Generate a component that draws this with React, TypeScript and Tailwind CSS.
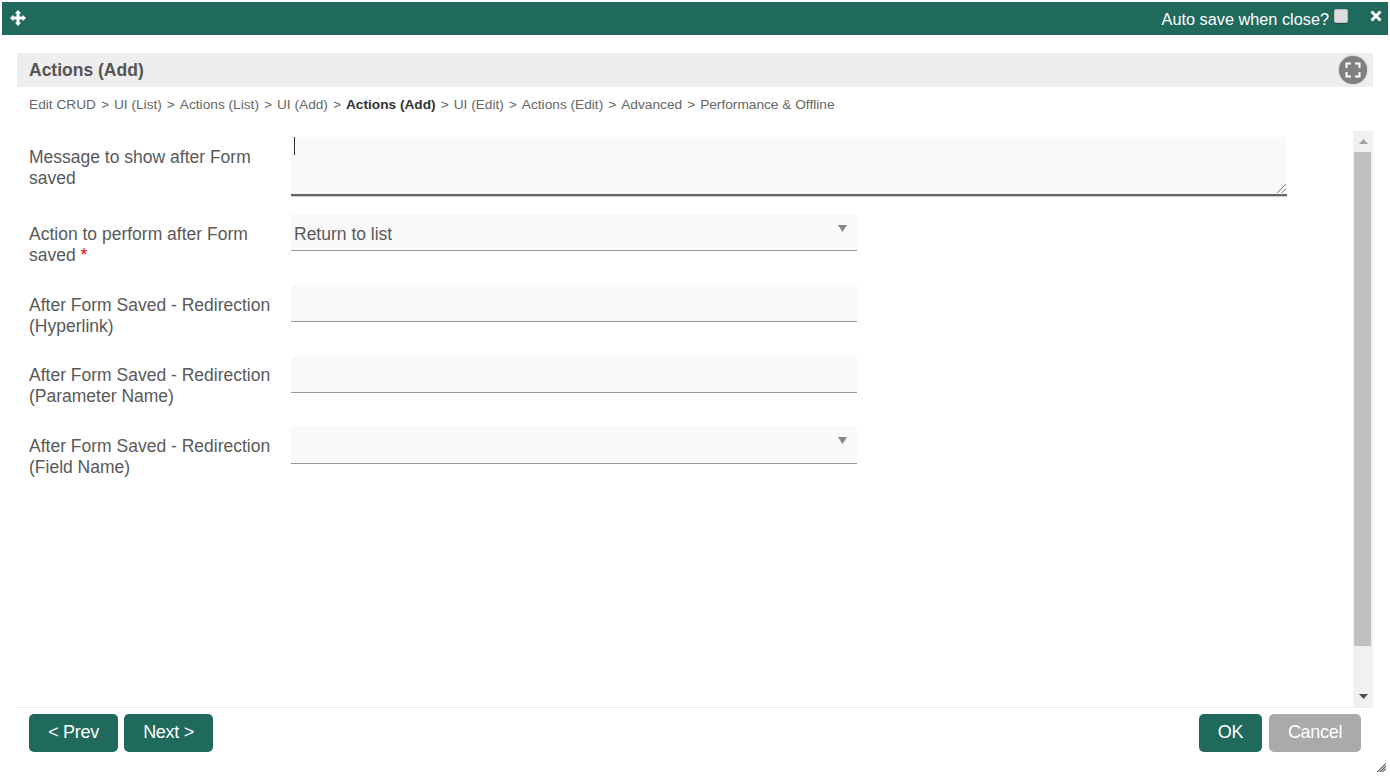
const Field = ({
  label,
  required,
  mb,
  h,
  children,
}: {
  label: string[];
  required?: boolean;
  mb: string;
  h: string;
  children?: React.ReactNode;
}) => {
  return (
    <div className={`flex ${mb}`}>
      <div className="w-[274px] shrink-0 pl-3 pt-[10px] text-[17.5px] leading-[21px] text-[#595959]">
        <div>{label[0]}</div>
        <div>
          {label[1]}
          {required && <span className="text-[#e00]"> *</span>}
        </div>
      </div>
      <div className={`relative w-[566px] ${h} bg-[#f9f9f9] border-b border-[#999]`}>{children}</div>
    </div>
  );
};

const Caret = () => (
  <svg className="absolute right-[10px] top-[11px]" width="9" height="7" viewBox="0 0 9 7">
    <path d="M0 0h9L4.500 7z" fill="#888" />
  </svg>
);

const crumbs = [
  "Edit CRUD",
  "UI (List)",
  "Actions (List)",
  "UI (Add)",
  "Actions (Add)",
  "UI (Edit)",
  "Actions (Edit)",
  "Advanced",
  "Performance & Offline",
];

const btn = "h-[38px] rounded-[5px] pb-0.5 text-[18px] tracking-[-0.3px] text-white";

const App = () => {
  return (
    <div className="relative flex h-screen flex-col bg-white px-[2px] pb-[25px] pt-[2px] font-['Liberation_Sans',Arial,sans-serif]">
      <div className="flex h-[33px] shrink-0 items-start justify-between bg-[#206a5d] text-white">
        <svg className="ml-[8px] mt-[8px]" width="16" height="16" viewBox="0 0 16 16" fill="#fff">
          <path d="M8 0l3.200 3.400H9.500v3.100h3.100V4.800L16 8l-3.400 3.200V9.500H9.500v3.100h1.700L8 16l-3.200-3.400h1.700V9.500H3.400v1.700L0 8l3.400-3.200v1.700h3.100V3.400H4.800z" />
        </svg>
        <div className="flex items-start">
          <span className="mt-[7px] text-[16.3px] leading-[21px]">Auto save when close?</span>
          <span className="ml-[5px] mt-[7px] h-[14px] w-[14px] rounded-[2px] border border-[#bbb] bg-[#ddd] shadow-[0_1px_1px_rgba(0,0,0,0.25)]" />
          <svg className="ml-[22px] mr-[6px] mt-[8px]" width="12" height="12" viewBox="0 0 12 12">
            <path d="M1.500 1.500l9 9M10.500 1.500l-9 9" stroke="#fff" strokeWidth="3" />
          </svg>
        </div>
      </div>

      <div className="mx-[15px] mt-[18px] flex min-h-0 flex-1 flex-col">
        <div className="flex h-[34px] shrink-0 items-center justify-between bg-[#eee] pl-3 pr-[6px]">
          <h2 className="text-[17.5px] font-bold text-[#555]">Actions (Add)</h2>
          <div className="flex h-[28px] w-[28px] items-center justify-center rounded-full bg-[#808080] shadow-[0_0_2px_rgba(0,0,0,0.3)]">
            <svg width="16" height="16" viewBox="0 0 16 16" fill="none" stroke="#fff" strokeWidth="2">
              <path d="M1.500 6V1.500H6M10 1.500h4.500V6M14.500 10v4.500H10M6 14.500H1.500V10" />
            </svg>
          </div>
        </div>

        <div className="mt-[9px] flex h-[18px] shrink-0 items-center pl-3 text-[13.7px] text-[#666]">
          {crumbs.map((c, i) => (
            <span key={c} className="flex">
              {i > 0 && <span className="mx-[5px]">&gt;</span>}
              <span className={c === "Actions (Add)" ? "font-bold text-[#333]" : ""}>{c}</span>
            </span>
          ))}
        </div>

        <div className="mt-[17px] flex min-h-0 flex-1 border-b border-[#eee]">
          <div className="flex-1 pt-[6px]">
            <div className="mb-[18px] flex">
              <div className="w-[274px] shrink-0 pl-3 pt-[10px] text-[17.5px] leading-[21px] text-[#595959]">
                <div>Message to show after Form</div>
                <div>saved</div>
              </div>
              <div className="relative h-[59px] w-[996px] border-b-2 border-[#666] bg-[#f9f9f9] shadow-[0_1px_0_#ccc]">
                <span className="absolute left-[3px] top-0 h-[18px] w-px bg-[#333]" />
                <svg className="absolute bottom-[1px] right-[1px]" width="10" height="10" viewBox="0 0 10 10">
                  <path d="M1 10l9-9M5.500 10L10 5.500" stroke="#777" strokeWidth="1" />
                </svg>
              </div>
            </div>
            <Field label={["Action to perform after Form", "saved"]} required mb="mb-[19px]" h="h-[37px]">
              <span className="absolute left-[3px] top-[9px] pt-px text-[17.5px] leading-[21px] text-[#595959]">Return to list</span>
              <Caret />
            </Field>
            <Field label={["After Form Saved - Redirection", "(Hyperlink)"]} mb="mb-[18px]" h="h-[37px]" />
            <Field label={["After Form Saved - Redirection", "(Parameter Name)"]} mb="mb-[19px]" h="h-[38px]" />
            <Field label={["After Form Saved - Redirection", "(Field Name)"]} mb="mb-0" h="h-[38px]">
              <Caret />
            </Field>
          </div>

          <div className="flex w-[20px] shrink-0 flex-col items-start bg-[#f1f1f1]">
            <div className="flex h-[21px] w-full items-center justify-center">
              <svg width="9" height="5" viewBox="0 0 9 5">
                <path d="M4.500 0L9 5H0z" fill="#a3a3a3" />
              </svg>
            </div>
            <div className="ml-px h-[494px] w-[17px] bg-[#c1c1c1]" />
            <div className="mt-auto flex h-[21px] w-full items-center justify-center">
              <svg width="9" height="5" viewBox="0 0 9 5">
                <path d="M0 0h9L4.500 5z" fill="#505050" />
              </svg>
            </div>
          </div>
        </div>

        <div className="flex h-[44px] shrink-0 items-end justify-between px-3">
          <div className="flex gap-[6px]">
            <button className={`${btn} w-[89px] bg-[#206a5d]`}>&lt; Prev</button>
            <button className={`${btn} w-[89px] bg-[#206a5d]`}>Next &gt;</button>
          </div>
          <div className="flex gap-[7px]">
            <button className={`${btn} w-[63px] bg-[#206a5d]`}>OK</button>
            <button className={`${btn} w-[92px] bg-[#aaa]`}>Cancel</button>
          </div>
        </div>
      </div>

      <svg className="absolute bottom-[5px] right-[4px]" width="9" height="9" viewBox="0 0 9 9">
        <path d="M0 9L9 0M3 9L9 3M6 9L9 6M1.500 9L9 1.500M4.500 9L9 4.500" stroke="#666" strokeWidth="1" />
      </svg>
    </div>
  );
};

export default App;
